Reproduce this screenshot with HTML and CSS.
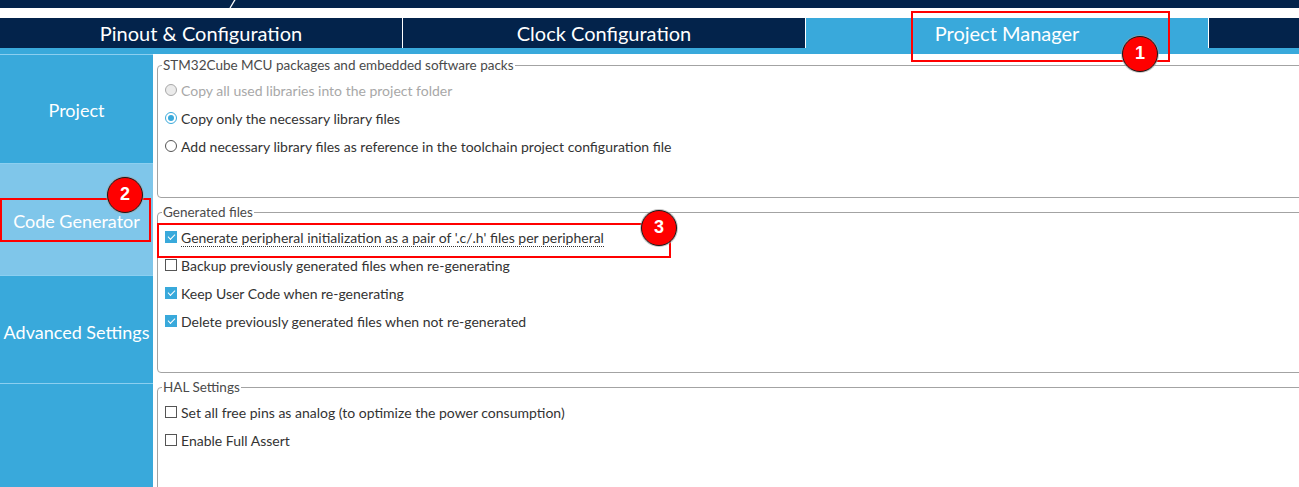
FILE: index.html
```html
<!DOCTYPE html>
<html lang="en">
<head>
    <meta charset="UTF-8">
    <meta name="viewport" content="width=device-width, initial-scale=1.0">
    <title>Project Manager - Code Generator</title>
    <link rel="stylesheet" href="styles.css">
</head>
<body>

    <div class="topbar">
        <span class="crumb">myProject.ioc - Config</span>
        <svg class="chevron" width="14" height="8" viewBox="0 0 14 8"><path d="M2 8 L8 -2" stroke="#fff" stroke-width="1.3" fill="none"/></svg>
    </div>

    <nav class="tabs">
        <div class="tab">Pinout &amp; Configuration</div>
        <div class="tab">Clock Configuration</div>
        <div class="tab active">Project Manager</div>
        <div class="tab"></div>
    </nav>
    <div class="strip"></div>

    <div class="main">
        <aside class="sidebar">
            <div class="side-item">Project</div>
            <div class="side-item selected">Code Generator</div>
            <div class="side-item short">Advanced Settings</div>
            <div class="side-item empty"></div>
        </aside>

        <div class="content">
            <fieldset class="group">
                <legend>STM32Cube MCU packages and embedded software packs</legend>
                <div class="opt disabled"><span class="radio"></span>Copy all used libraries into the project folder</div>
                <div class="opt"><span class="radio on"></span>Copy only the necessary library files</div>
                <div class="opt"><span class="radio"></span>Add necessary library files as reference in the toolchain project configuration file</div>
            </fieldset>

            <fieldset class="group">
                <legend>Generated files</legend>
                <div class="opt"><span class="check on"></span><span class="dotted">Generate peripheral initialization as a pair of '.c/.h' files per peripheral</span></div>
                <div class="opt"><span class="check"></span>Backup previously generated files when re-generating</div>
                <div class="opt"><span class="check on"></span>Keep User Code when re-generating</div>
                <div class="opt"><span class="check on"></span>Delete previously generated files when not re-generated</div>
            </fieldset>

            <fieldset class="group last">
                <legend>HAL Settings</legend>
                <div class="opt"><span class="check"></span>Set all free pins as analog (to optimize the power consumption)</div>
                <div class="opt"><span class="check"></span>Enable Full Assert</div>
            </fieldset>
        </div>
    </div>

    <!-- annotations drawn over the screenshot -->
    <div class="marks">
        <div class="box box-1"></div>
        <div class="box box-2"></div>
        <div class="box box-3"></div>
        <div class="badge badge-1">1</div>
        <div class="badge badge-2">2</div>
        <div class="badge badge-3">3</div>
    </div>

</body>
</html>
```

FILE: styles.css
```css
body {
    margin: 0;
    width: 1299px;
    height: 487px;
    overflow: hidden;
    position: relative;
    font-family: Lato, "Noto Sans", sans-serif;
    background-color: #fff;
    color: #333;
}

/* breadcrumb bar, only its lower edge is visible */
.topbar {
    height: 8px;
    background-color: #03234b;
    overflow: hidden;
    display: flex;
    align-items: flex-start;
    padding-left: 30px;
}
.crumb {
    color: #fff;
    font-size: 20px;
    line-height: 20px;
    margin-top: -21px;
    white-space: nowrap;
}
.chevron {
    margin-left: 4px;
}

.tabs {
    margin-top: 10px;
    height: 30px;
    display: grid;
    grid-template-columns: 402px 402px 402px 1fr;
    gap: 1px;
    background-color: #fff;
}
.tab {
    background-color: #03234b;
    color: #fff;
    font-size: 20px;
    line-height: 30px;
    text-align: center;
}
.tab.active {
    background-color: #39a9db;
}
.strip {
    height: 6px;
    background-color: #39a9db;
}

.main {
    display: flex;
    height: 433px;
}
.sidebar {
    width: 153px;
    flex-shrink: 0;
    background-color: #39a9db;
    display: flex;
    flex-direction: column;
}
.side-item {
    box-sizing: border-box;
    height: 109px;
    border-top: 1px solid #8ccff0;
    color: #fff;
    font-size: 18px;
    display: flex;
    align-items: center;
    justify-content: center;
    white-space: nowrap;
    padding-top: 2px;
}
.side-item.selected {
    height: 112px;
    background-color: #7fc6ea;
}
.side-item.short {
    height: 108px;
    padding-top: 4px;
}
.side-item.empty {
    flex: 1;
}

.content {
    flex: 1;
    overflow: hidden;
    padding: 3px 0 0 4px;
}
.group {
    margin: 0 -20px 6px 0;
    border: 1px solid #a3a3a3;
    border-radius: 4px;
    padding: 3px 0 37px 4px;
}
.group.last {
    height: 200px;
}
legend {
    padding: 0 1px;
    font-size: 13.5px;
    line-height: 16px;
    color: #4a4a4a;
}
.opt {
    display: flex;
    align-items: center;
    gap: 4px;
    height: 28px;
    padding-left: 3px;
    font-size: 14px;
    color: #333;
    white-space: nowrap;
}
.opt.disabled {
    color: #a8a8a8;
}

.radio {
    box-sizing: border-box;
    width: 12px;
    height: 12px;
    border: 1px solid #555;
    border-radius: 50%;
    background-color: #fff;
    display: flex;
    align-items: center;
    justify-content: center;
}
.opt.disabled .radio {
    border-color: #a8a8a8;
    background-color: #ebebeb;
}
.radio.on {
    border-color: #39a9db;
}
.radio.on::after {
    content: "";
    width: 6px;
    height: 6px;
    border-radius: 50%;
    background-color: #39a9db;
}

.check {
    box-sizing: border-box;
    width: 12px;
    height: 12px;
    border: 1px solid #555;
    background-color: #fff;
    display: flex;
    align-items: center;
    justify-content: center;
}
.check.on {
    border-color: #39a9db;
    background-color: #39a9db;
}
.check.on::after {
    content: "";
    width: 6px;
    height: 3px;
    border-left: 1.6px solid #fff;
    border-bottom: 1.6px solid #fff;
    transform: translateY(-1px) rotate(-45deg);
}
.dotted {
    border-bottom: 1px dotted #333;
    line-height: 15px;
    padding-bottom: 1px;
    margin-top: 3px;
}

/* red highlight boxes and numbered badges */
.marks {
    position: absolute;
    inset: 0;
    pointer-events: none;
}
.box {
    position: absolute;
    border: 2px solid #ff0000;
    box-sizing: border-box;
}
.box-1 { left: 911px; top: 11px; width: 259px; height: 51px; }
.box-2 { left: 0; top: 198px; width: 151px; height: 44px; }
.box-3 { left: 157px; top: 223px; width: 514px; height: 35px; }
.badge {
    position: absolute;
    box-sizing: border-box;
    width: 36px;
    height: 36px;
    border-radius: 50%;
    background-color: #f00;
    border: 1.5px solid #1a1a1a;
    box-shadow: 0 0 0 1px rgba(160, 160, 160, 0.6);
    color: #fff;
    font-family: "Liberation Sans", Arial, sans-serif;
    font-weight: bold;
    font-size: 18px;
    line-height: 33px;
    text-align: center;
}
.badge-1 { left: 1122px; top: 36px; }
.badge-2 { left: 107px; top: 177px; }
.badge-3 { left: 641px; top: 210px; }
```
